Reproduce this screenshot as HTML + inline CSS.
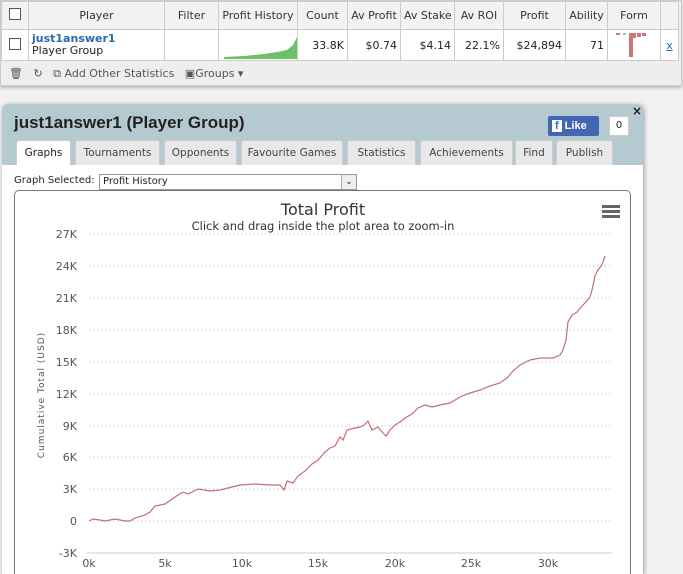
<!DOCTYPE html>
<html><head><meta charset="utf-8"><style>
*{box-sizing:border-box;margin:0;padding:0}
body{width:683px;height:567px;overflow:hidden;background:#f1f1f1;font-family:"DejaVu Sans","Liberation Sans",sans-serif;font-size:11px;color:#222;position:relative}
.top{position:absolute;left:0;top:0;width:682px;height:86px;background:#eee;border:1px solid #ccc;box-shadow:0 2px 3px #bbb}
table{border-collapse:collapse;position:absolute;left:0;top:0;background:#fff;table-layout:fixed;width:677px}
td{border:1px solid #ccc;text-align:center;font-size:11px;padding:0 3px;white-space:nowrap;overflow:hidden}
tr.h td{background:#f2f2f2;height:28px;color:#333}
tr.r td{height:29px;text-align:right}
.cb{display:inline-block;width:12px;height:12px;border:1px solid #555;background:#fff}
.bar{position:absolute;left:8px;top:66px;color:#555;font-size:11px}
.panel{position:absolute;left:2px;top:104px;width:641px;height:470px;background:#fff;border-radius:6px 6px 0 0;box-shadow:1px 1px 5px #999;overflow:hidden}
.hd{height:61px;background:#b5c9d0}
.tab{position:absolute;top:0;height:25px;background:#e8e8e8;border:1px solid #ccc;border-bottom:none;border-radius:3px 3px 0 0;font-size:10.5px;color:#444;text-align:center;line-height:24px}
.tab.a{background:#fff;color:#222}
</style></head><body>
<div class="top">
<table>
<colgroup><col style="width:27px"><col style="width:136px"><col style="width:54px"><col style="width:79px"><col style="width:50px"><col style="width:53px"><col style="width:54px"><col style="width:49px"><col style="width:62px"><col style="width:42px"><col style="width:53px"><col style="width:18px"></colgroup>
<tr class="h"><td><span class="cb"></span></td><td>Player</td><td>Filter</td><td>Profit History</td><td>Count</td><td>Av Profit</td><td>Av Stake</td><td>Av ROI</td><td>Profit</td><td>Ability</td><td>Form</td><td></td></tr>
<tr class="r"><td style="text-align:center"><span class="cb"></span></td><td style="text-align:left;line-height:12px"><b style="color:#2a6aaa">just1answer1</b><br>Player Group</td><td></td><td style="padding:0;position:relative"><svg width="79" height="27" style="display:block"><polygon points="5,25 25,24 45,22 58,20 68,18 74,13 78,5 78,27 5,27" fill="#6cc068"/></svg></td><td>33.8K</td><td>$0.74</td><td>$4.14</td><td>22.1%</td><td>$24,894</td><td>71</td><td style="padding:0"><svg width="53" height="27"><rect x="8" y="3" width="4" height="2" fill="#c77"/><rect x="15" y="3" width="3" height="2" fill="#9c9"/><rect x="21" y="3" width="4" height="24" fill="#c77"/><rect x="25" y="3" width="3" height="5" fill="#c77"/><rect x="29" y="3" width="4" height="4" fill="#c77"/><rect x="34" y="3" width="4" height="3" fill="#c77"/></svg></td><td style="color:#2a6aaa;text-decoration:underline;text-align:center;padding:0">x</td></tr>
</table>
<div class="bar">🗑&nbsp;&nbsp; ↻&nbsp;&nbsp; ⧉ Add Other Statistics&nbsp;&nbsp; ▣Groups ▾</div>
</div>
<div class="panel">
<div class="hd"></div>
<h1 style="position:absolute;left:12px;top:9px;font:bold 17px 'Liberation Sans',sans-serif;color:#222">just1answer1 (Player Group)</h1>
<div style="position:absolute;left:546px;top:12px;width:51px;height:20px;background:#4267b2;border-radius:2px;color:#fff;font:bold 11px 'Liberation Sans',sans-serif;line-height:20px;padding-left:4px"><span style="background:#fff;color:#4267b2;padding:0 3px;margin-right:3px">f</span>Like</div>
<div style="position:absolute;left:607px;top:12px;width:20px;height:20px;border:1px solid #ccc;background:#fff;font-size:10px;text-align:center;line-height:18px">0</div>
<div style="position:absolute;left:630px;top:0;font-weight:bold;font-size:12px">×</div>
<div class="tab a" style="left:14px;top:36px;width:55px">Graphs</div>
<div class="tab" style="left:73px;top:36px;width:85px">Tournaments</div>
<div class="tab" style="left:162px;top:36px;width:73px">Opponents</div>
<div class="tab" style="left:239px;top:36px;width:102px">Favourite Games</div>
<div class="tab" style="left:345px;top:36px;width:69px">Statistics</div>
<div class="tab" style="left:418px;top:36px;width:93px">Achievements</div>
<div class="tab" style="left:513px;top:36px;width:38px">Find</div>
<div class="tab" style="left:554px;top:36px;width:57px">Publish</div>
<div style="position:absolute;left:12px;top:71px;font-size:10px">Graph Selected:</div>
<div style="position:absolute;left:97px;top:70px;width:258px;height:16px;border:1px solid #999;font-size:10px;padding-left:3px;line-height:14px">Profit History<span style="position:absolute;right:0;top:0;width:15px;height:14px;border-left:1px solid #aaa;background:#eee;text-align:center;font-size:9px">⌄</span></div>
<div style="position:absolute;left:12px;top:86px;width:617px;height:400px;border:1px solid #777;border-radius:5px"></div>
</div>
<svg width="683" height="567" style="position:absolute;left:0;top:0" font-family="DejaVu Sans,Liberation Sans,sans-serif">
<text x="323" y="215" text-anchor="middle" font-size="16" fill="#333">Total Profit</text>
<text x="323" y="230" text-anchor="middle" font-size="11.5" fill="#333">Click and drag inside the plot area to zoom-in</text>
<g fill="#666"><rect x="602" y="205" width="18" height="3"/><rect x="602" y="210" width="18" height="3"/><rect x="602" y="215" width="18" height="3"/></g>
<g stroke="#bbb" stroke-dasharray="1,3">
<line x1="89" x2="610" y1="234" y2="234"/><line x1="89" x2="610" y1="266" y2="266"/><line x1="89" x2="610" y1="298" y2="298"/><line x1="89" x2="610" y1="330" y2="330"/><line x1="89" x2="610" y1="362" y2="362"/><line x1="89" x2="610" y1="394" y2="394"/><line x1="89" x2="610" y1="426" y2="426"/><line x1="89" x2="610" y1="457" y2="457"/><line x1="89" x2="610" y1="489" y2="489"/><line x1="89" x2="610" y1="521" y2="521"/></g>
<line x1="86" x2="612" y1="553" y2="553" stroke="#ccc"/>
<g font-size="11" fill="#555" text-anchor="end">
<text x="77" y="238">27K</text><text x="77" y="270">24K</text><text x="77" y="302">21K</text><text x="77" y="334">18K</text><text x="77" y="366">15K</text><text x="77" y="398">12K</text><text x="77" y="430">9K</text><text x="77" y="461">6K</text><text x="77" y="493">3K</text><text x="77" y="525">0</text><text x="77" y="557">-3K</text></g>
<g font-size="11" fill="#555" text-anchor="middle"><text x="89" y="567">0k</text><text x="165" y="567">5k</text><text x="242" y="567">10k</text><text x="318" y="567">15k</text><text x="395" y="567">20k</text><text x="471" y="567">25k</text><text x="548" y="567">30k</text></g>
<text transform="translate(44,395) rotate(-90)" text-anchor="middle" font-size="9" fill="#555" letter-spacing="1">Cumulative Total (USD)</text>
<polyline fill="none" stroke="#c07070" stroke-width="1.2" points="89,521 93,519 100,520 105,521 115,519 125,521 130,521 135,518 145,515 150,512 155,506 165,504 175,497 183,492 188,494 198,489 210,491 220,490 240,485 255,484 270,485 280,485 284,490 287,481 293,483 298,476 305,471 312,464 318,460 325,452 330,448 335,446 340,437 343,440 347,430 355,428 360,427 364,425 368,421 372,430 378,427 382,432 386,436 390,430 395,425 400,422 405,418 412,414 418,408 425,405 432,407 440,405 450,403 460,397 470,393 480,390 490,386 500,383 508,377 513,371 520,365 530,360 540,358 553,358 560,355 563,350 566,340 568,322 572,315 577,312 582,306 586,302 590,297 592,290 595,276 598,270 601,266 603,262 605,256"/>
</svg>
</body></html>
